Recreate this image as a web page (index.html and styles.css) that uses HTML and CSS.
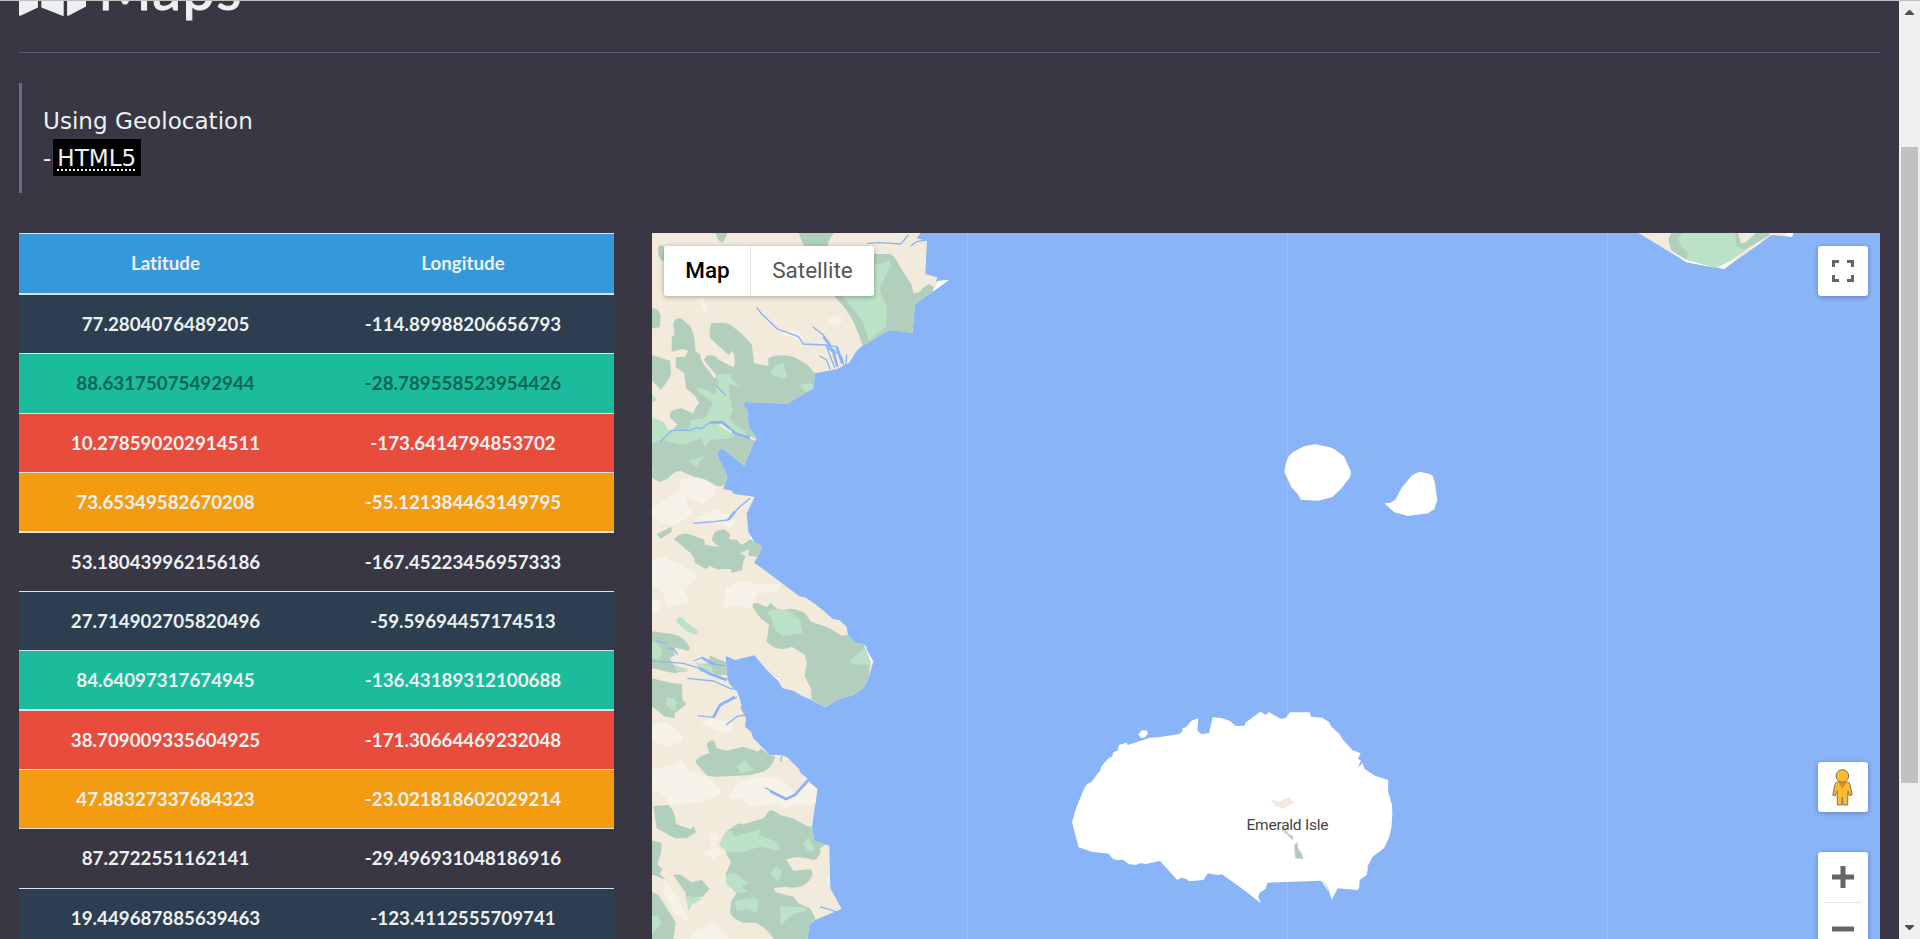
FILE: index.html
```html
<!DOCTYPE html>
<html lang="en">
<head>
<meta charset="utf-8">
<title>Maps</title>
<link rel="stylesheet" href="styles.css">
</head>
<body>
<div class="page">
<main class="content">
  <h1 class="title">
    <svg class="title-icon" viewBox="0 0 70 60"><path d="M0 10 19.500 0V51L1.500 59.500Q0 60 0 58.500ZM23 0 46 10V60L23 51ZM49.500 10 69 0V50L51 59.500Q49.500 60 49.500 58.500Z"/></svg>
    <span>Maps</span>
  </h1>
  <blockquote class="quote">
    <p>Using Geolocation</p>
    <p>-<abbr class="tag" title="HyperText Markup Language">HTML5</abbr></p>
  </blockquote>
  <div class="columns">
    <div class="coords">
      <div class="row head"><span>Latitude</span><span>Longitude</span></div>
      <div class="row active thick"><span>77.2804076489205</span><span>-114.89988206656793</span></div>
      <div class="row success muted"><span>88.63175075492944</span><span>-28.789558523954426</span></div>
      <div class="row danger short"><span>10.278590202914511</span><span>-173.6414794853702</span></div>
      <div class="row warning short"><span>73.65349582670208</span><span>-55.121384463149795</span></div>
      <div class="row thick"><span>53.180439962156186</span><span>-167.45223456957333</span></div>
      <div class="row active short"><span>27.714902705820496</span><span>-59.59694457174513</span></div>
      <div class="row success short"><span>84.64097317674945</span><span>-136.43189312100688</span></div>
      <div class="row danger thick"><span>38.709009335604925</span><span>-171.30664469232048</span></div>
      <div class="row warning short"><span>47.88327337684323</span><span>-23.021818602029214</span></div>
      <div class="row"><span>87.2722551162141</span><span>-29.496931048186916</span></div>
      <div class="row active"><span>19.449687885639463</span><span>-123.4112555709741</span></div>
    </div>
    <div class="map">
      <svg class="terrain" viewBox="652 233 1228 706">
        <!-- mainland -->
        <g transform="translate(650 230) scale(.33333)">
          <path class="land" d="M0 0H818L800 25 831 32 826 132 862 142 858 155 895 150 848 185 795 222 787 308 718 300 638 347 620 362 598 398 560 418 495 430 490 475 410 522 360 518 285 516 280 525 292 540 296 592 318 622 308 645 283 707 218 655 201 667 208 690 223 720 232 740 220 777 245 782 252 792 298 798 314 802 290 850 295 905 312 935 337 952 313 998 450 1100 465 1102 495 1122 518 1140 550 1168 568 1170 590 1190 594 1215 618 1240 640 1242 670 1295 655 1345 640 1375 610 1395 560 1410 525 1432 480 1408 430 1382 398 1375 385 1342 348 1317 313 1276 255 1290 227 1278 230 1330 237 1360 250 1375 262 1385 275 1425 272 1435 288 1465 285 1490 303 1505 310 1525 360 1575 392 1575 410 1580 447 1617 452 1630 472 1645 480 1657 502 1677 486 1790 492 1832 538 1847 541 1975 575 2037 495 2070 478 2085 472 2130H0Z"/>
          <path class="snow" d="M865 152 897 150 848 185ZM640 1242 650 1252 650 1272 660 1302 670 1295ZM345 1315 387 1345 398 1375 385 1352ZM505 1417 525 1432 545 1420ZM534 1940Q528 1950 539 1958ZM300 915 312 935 303 935ZM330 518Q350 508 366 517ZM432 1383 480 1408 455 1397Z"/>
          <path class="wood" d="M197 8Q205 40 218 38 228 25 232 8ZM446 8 462 50H533L535 35 552 8ZM25 50Q35 38 45 55V95Q20 90 25 50ZM672 72H720Q735 78 745 102L785 165 790 190Q812 188 818 175L835 163 852 170 848 185 795 222 787 308 718 300 638 347Q610 260 577 225L552 197H672ZM0 232Q28 235 32 255L30 292 0 296ZM65 365 65 322 74 315 70 280Q75 260 95 266L122 290Q136 320 136 362L152 375Q150 390 170 415L193 445 200 438 162 390 170 377Q195 372 204 388L250 412Q260 390 248 362L236 375 182 326 178 310 183 280Q230 275 245 287L276 312 306 345 312 400 355 408 355 385Q380 370 430 380L470 402 495 430 490 475 410 522 285 516 280 525 292 540 296 592 318 622 308 645 283 707 218 655 201 667 208 690 223 720 232 740 222 765Q202 775 185 758L132 740 92 723Q75 720 55 745L30 757 0 740V585L50 600 60 608 82 583 62 565Q50 540 95 535L130 550 138 530 148 520 135 497 108 475 103 430 77 410 78 382 105 380 115 363 100 357ZM0 373 60 392 63 430Q58 450 32 480L0 445ZM20 913 65 890 65 905 32 927ZM72 927Q90 908 115 912L162 928 165 945 205 950 185 930Q190 895 225 899L240 912 237 928 260 930 275 945 302 928 337 952 322 980 295 977 297 958 270 970 288 978Q275 1000 277 1020L245 1028 242 1017 200 1018 178 1007 168 1017 136 1000Q130 970 110 960ZM307 1127Q313 1110 338 1127L352 1130 362 1120 392 1145Q420 1125 465 1150L484 1175 540 1195 575 1217 592 1215 618 1240 640 1242 662 1295 655 1345 640 1375 610 1395 560 1410 525 1432 484 1408 484 1377 464 1340 470 1300 465 1275 425 1250Q385 1270 350 1235L357 1183Q325 1165 307 1127ZM0 1203 70 1213Q105 1220 120 1255L115 1262 70 1252 75 1275 60 1285 70 1305 115 1320 75 1330 40 1323 0 1312ZM180 1277 229 1297 230 1335 200 1335 150 1302 175 1300ZM0 1343 60 1358 95 1362 98 1410 110 1422 75 1450 73 1464 45 1460 0 1425ZM136 1597Q140 1580 178 1570L170 1545Q175 1530 193 1532L200 1555 230 1562 280 1550 325 1565 332 1555 360 1575 376 1580Q365 1615 340 1625L300 1635 200 1640 172 1637ZM10 1728 55 1725Q75 1740 78 1782L120 1797 132 1790 138 1807 110 1825H75L20 1795ZM0 1830 35 1838 33 1870 22 1903 37 1918 30 1932 47 1950 0 1930ZM70 1935 90 1933 125 1957 155 1950 179 1977 158 2000 107 2005V1990ZM0 1983 25 1995 77 2077 70 2130H0ZM245 1793Q270 1775 280 1783L340 1765 360 1740Q375 1742 390 1755L430 1765 470 1788 486 1790 492 1832 527 1843 510 1855 512 1870Q495 1895 490 1890 450 1875 408 1888 415 1900 430 1922 L480 1918Q495 1925 480 1950 455 1980 410 1970 L375 1973Q365 1985 395 1992L430 2000 445 2020 480 2035 497 2065 478 2085 472 2130H375L350 2100 320 2078 280 2078Q240 2065 240 2040L245 2010 260 1990 230 1960 228 1930 243 1895 230 1875 228 1860 208 1845Q225 1800 245 1793Z"/>
          <path class="park" d="M675 102Q700 100 718 93L724 105 690 170 695 200 712 230 708 290 657 332Q645 270 595 220L575 197H672ZM360 430 378 405 400 398 412 445Q395 450 360 430ZM450 465Q480 455 488 465L485 480 465 485ZM197 435 245 430 243 445 268 472 235 460 240 500 248 545 238 565 257 585 290 605 282 625Q260 610 240 625L182 630 165 650 155 625 100 645 30 630 0 645V560L40 575 55 600 120 595 120 570 165 565 190 520 140 480Q140 465 195 492L205 455ZM0 485 22 510 0 520ZM115 692 165 677 150 695 138 710ZM0 720 20 715 0 730ZM350 1145Q380 1130 415 1142L450 1170 458 1210 400 1218Q365 1200 365 1165ZM80 1165Q95 1155 108 1177L143 1200 143 1214Q115 1215 80 1175ZM0 1230Q30 1235 38 1270L25 1290 0 1280ZM137 1297 185 1310 190 1330 150 1325ZM74 1307 110 1320 113 1327 78 1322ZM596 1292 637 1262 645 1250 660 1305 610 1303ZM48 1403Q75 1400 80 1420L77 1443 50 1428ZM258 1610 282 1590 312 1620 275 1630ZM208 1845Q220 1805 245 1800L250 1820 335 1797 325 1815 380 1835 390 1862 330 1850 270 1868 228 1862ZM460 1840 475 1822 495 1860 475 1865ZM360 1930 378 1910 395 1920 393 1940 380 1953ZM232 1935Q240 1925 260 1932L294 1960 275 1970 292 1985 265 1990 230 1965ZM255 2013 315 2003 327 2010 320 2047 290 2037 260 2043ZM390 2027 468 2033 465 2045 430 2052 392 2085ZM107 1998 158 2005 125 2025 115 2043ZM0 2055 25 2060 33 2080 0 2120Z"/>
          <path class="wood" d="M692 170Q705 140 725 175L790 220 787 308 712 300 715 230 692 190Z"/>
          <path class="bare" d="M145 200H158L173 243 165 250ZM533 270Q550 255 575 262L577 275 555 290ZM397 312 430 298 455 315 460 340ZM95 748Q130 735 170 750L198 775 195 790 160 822 110 800Q100 810 130 850L95 875 65 887 10 865 0 835 30 815 85 787ZM132 865 200 840 235 855 258 875 240 895 210 880ZM0 990 40 980 85 1000 143 1030 138 1045 105 1070 90 1055 120 1115 55 1132 35 1080 0 1060ZM0 1108 25 1110 35 1135 30 1150 0 1148ZM220 1135 228 1075Q260 1050 300 1060L355 1065 393 1062 380 1085 320 1090 300 1135 250 1125ZM0 1493Q35 1465 60 1485L100 1520 95 1535 50 1547 0 1530ZM150 1480 185 1463 250 1480 245 1505 210 1505ZM0 1620Q50 1615 95 1590L115 1620 180 1640 215 1680 205 1695 150 1718 55 1722 45 1700 0 1675ZM237 1705 255 1665 310 1642 380 1640Q405 1645 430 1690L480 1660 502 1677 497 1720 475 1727 435 1720 410 1738 380 1720 300 1732 280 1708ZM165 1868 185 1855 180 1815 200 1810 203 1830 195 1850 218 1868 190 1888ZM43 1950 85 2000 95 2030 120 2078 75 2050 40 1990ZM118 2130 125 2105 155 2095 195 2077 240 2130Z"/>
          <path class="river" d="M30 637 65 602 105 600 120 602 140 592 152 597 180 577 218 577 255 610 300 623M200 467 227 497M320 232 335 252 370 285 382 297 445 320 460 342 527 345 560 350M488 290 520 315 550 360 575 380 582 410M528 345 545 390 555 415M508 378 530 390 540 418M590 373 588 405M652 40 690 38 752 42 775 15M782 48 800 35 830 30M130 880 190 875 232 870 255 845 272 828 300 805M0 1292 60 1297 100 1300 150 1315 180 1330 220 1345 245 1348M132 1293 155 1283 190 1302 225 1308M20 1232 50 1240M55 1253 72 1257 83 1275M112 1345 190 1353 240 1375 255 1378M143 1457 190 1462 210 1425 262 1401M228 1485 260 1460 285 1455M345 1673 408 1707 435 1695 475 1650M510 2030 558 2045M395 1578 392 1594"/>
          <path class="channel" d="M533 350 550 365 562 410M560 350 577 400M520 320 540 345M180 577H218L255 610 300 625M150 1315 180 1332 230 1350M190 1462 210 1425 255 1401M360 1683 408 1707 435 1695 475 1650M155 1283 190 1302M235 870 255 845"/>
          <path class="bare-line" d="M208 583 245 607M300 622 318 630"/>
        </g>
        <!-- northern cape -->
        <g transform="translate(1600 225) scale(.33333)">
          <path class="land" d="M112 22H580L576 35 515 30 372 132 260 112Z"/>
          <path class="wood" d="M215 22 205 42 213 75 258 107 345 128 510 30 505 22Z"/>
          <path class="park" d="M248 22 235 42 243 65 262 80 260 108 355 128 440 75 410 65 405 22Z"/>
          <path class="land" d="M413 22 423 55 438 52 470 22Z"/>
          <path class="snow" d="M210 77 260 112 345 128 260 105ZM410 102 352 127 372 132ZM440 80 480 50 482 54ZM560 22H580L576 35 558 33Z"/>
        </g>
        <!-- small islands -->
        <g transform="translate(1260 420) scale(.33333)">
          <path class="snow" d="M73 155 78 128 85 110 98 97 132 79 165 73 210 82 222 87 252 109 273 155 270 172 240 210 217 231 175 242 122 239 115 224 94 202ZM373 250 390 249 407 238 425 203 456 166 478 155 510 162 518 168 524 185 532 240 523 267 504 280 443 288 403 277Z"/>
        </g>
        <!-- Emerald Isle -->
        <g transform="translate(1050 690) scale(.33333)">
          <path class="snow" d="M66 397 78 355 102 297 112 281 124 276 150 242 155 228 175 205 185 201 190 187 202 182 208 164 230 158 233 165 300 143 325 142 388 132 397 125V115L408 112 424 92 445 85 442 122 455 133 477 129 488 82 515 84 541 94 557 108 584 107 586 98 631 65 647 75 656 66 692 86 708 83 720 67H779L783 80 817 83 838 97 843 109 868 131 877 147 908 181 932 190 924 206 933 212 923 233 938 220 944 237 975 257 1015 270 1014 304 1026 345 1027 375 1024 415 1017 443 1002 475 968 500 953 528V540L949 556 929 570 928 592 924 600 863 595 846 629 838 608 813 572 652 578 647 596 629 608 625 620 632 639 585 602 516 553 502 555 474 550 460 570 418 574 408 566 393 563 382 570 330 513 287 522 271 519 258 525 236 522 219 509 203 511 188 506 176 491 125 485 86 472ZM265 133 276 121 292 122 293 132 283 143 272 143Z"/>
          <path class="seam" d="M818 575Q832 585 837 608M816 577 834 608"/>
          <path class="land" d="M662 329 690 334 716 321 733 338 699 357 677 347Z"/>
          <path class="wood" d="M708 425 730 440 729 450 718 442ZM742 455 733 466V478L736 505 760 507 756 492 744 474Z"/>
          <path class="rock" d="M686 415 712 423 718 440Z"/>
        </g>
        <path class="tile" d="M967.500 233V939M1287.500 233V939M1607.500 233V939"/>
        <text class="place" x="1246.500" y="830" textLength="82">Emerald Isle</text>
      </svg>
      <div class="map-type"><button class="type-btn selected">Map</button><button class="type-btn">Satellite</button></div>
      <button class="control fullscreen" aria-label="Fullscreen"><svg viewBox="0 0 22 22"><path d="M0 0H7V3H3V7H0ZM15 0H22V7H19V3H15ZM0 15H3V19H7V22H0ZM19 15H22V22H15V19H19Z"/></svg></button>
      <button class="control pegman" aria-label="Street View"><svg viewBox="0 0 63 112"><path class="body" d="M18 39H45Q52 39 54 46L61 78 53 81 48 67 47 109H33L31 85 29 109H16L15 66 9 82 2 79 9 46Q11 39 18 39Z"/><path class="scarf" d="M19 39H44L31 60Z"/><circle class="body" cx="31" cy="21" r="19"/></svg></button>
      <div class="zoom"><button aria-label="Zoom in"><svg viewBox="0 0 22 22"><path d="M8.500 0H13.500V8.500H22V13.500H13.500V22H8.500V13.500H0V8.500H8.500Z"/></svg></button><button aria-label="Zoom out"><svg viewBox="0 0 22 22"><path d="M0 8.500H22V13.500H0Z"/></svg></button></div>
    </div>
  </div>
</main>
<aside class="scrollbar">
  <svg viewBox="0 0 9 5"><path d="M0 5V4L4 0H5L9 4V5Z"/></svg>
  <div class="thumb"></div>
  <svg viewBox="0 0 9 5"><path d="M0 0V1L4 5H5L9 1V0Z"/></svg>
</aside>
</div>
</body>
</html>
```
FILE: styles.css
```css
* { box-sizing: border-box; }
body { margin: 0; overflow: hidden; background: #383743; color: #ecf0f1; font-family: Lato, sans-serif; }
button { border: 0; padding: 0; background: none; font: inherit; }
.page { display: flex; height: 939px; border-top: 1px solid #c0c0c0; overflow: hidden; }
.content { flex: 1; min-width: 0; padding: 0 19px; }
.title { display: flex; align-items: flex-end; gap: 11px; height: 52px; margin: 0; border-bottom: 1px solid #5a5e7e; font-size: 58px; font-weight: 400; line-height: 58px; letter-spacing: 1.300px; -webkit-text-stroke: 1px #ecf0f1; }
.title-icon { width: 68px; height: 60px; fill: #ecf0f1; margin-bottom: 35px; flex: none; }
.title span { margin-bottom: 35px; }
.quote { margin: 30px 0 40px; height: 110px; padding: 20px 0 0 21px; border-left: 3px solid #69698d; font-family: "DejaVu Sans", sans-serif; font-size: 23.100px; line-height: 36px; }
.quote p { margin: 0; height: 36px; }
.tag { display: inline-block; height: 37px; line-height: 38px; margin-left: 2px; padding: 0 5px 0 4px; background: #000; text-decoration: underline dotted 2px; text-underline-offset: 3px; }
.columns { display: flex; gap: 38px; }
.coords { width: 595px; flex: none; font-size: 18.750px; font-weight: 700; font-variant-ligatures: none; }
.row { display: grid; grid-template-columns: 293px 302px; align-items: center; height: 60px; border-top: 1px solid #dfe2e5; text-align: center; line-height: 26px; padding-bottom: 1px; }
.short { height: 59px; }
.thick { border-top-width: 2px; }
.head { background: #3498db; }
.active { background: #2d3e50; }
.success { background: #1abc9c; }
.danger { background: #e84c3d; }
.warning { background: #f39c12; }
.muted { color: #0d6553; }
.map { position: relative; flex: 1; height: 706px; background: #8ab4f8; font-family: Roboto, sans-serif; overflow: hidden; }
.terrain { display: block; width: 1228px; height: 706px; }
.land { fill: #f2eadb; }
.wood { fill: #b2cfbd; }
.park { fill: #bbe2c6; }
.bare { fill: #f7f2e8; }
.snow { fill: #fff; }
.rock { fill: #d2cdc0; }
.river, .channel { fill: none; stroke: #8ab4f8; stroke-width: 4; }
.channel { stroke-width: 8; }
.bare-line { fill: none; stroke: #f2eadb; stroke-width: 7; }
.seam { fill: none; stroke: #8ab4f8; stroke-width: 2; }
.tile { fill: none; stroke: #fff; stroke-opacity: .16; }
.place { font-size: 15.500px; fill: #444; }
.map-type, .control, .zoom { position: absolute; background: #fff; border-radius: 3px; box-shadow: 0 1px 5px rgba(0, 0, 0, .3); }
.map-type { left: 12px; top: 13px; display: flex; height: 50px; }
.type-btn { width: 123px; padding-bottom: 2px; font-size: 22.500px; color: #565656; }
.type-btn.selected { width: 87px; padding-left: 1px; color: #000; font-weight: 500; border-right: 1px solid #e6e6e6; }
.control { right: 12px; width: 50px; height: 50px; display: grid; place-items: center; }
.control svg, .zoom svg { width: 22px; height: 22px; fill: #666; }
.fullscreen { top: 13px; }
.pegman { top: 529px; }
.pegman svg { width: 21px; height: 37px; margin-right: 2px; }
.pegman .body { fill: #fbbc2b; stroke: #77716a; stroke-width: 3; }
.pegman .scarf { fill: #e1842b; }
.zoom { right: 12px; top: 619px; width: 50px; height: 102px; padding: 0 6px; }
.zoom button { display: grid; place-items: center; width: 38px; height: 51px; }
.zoom button:first-child { border-bottom: 1px solid #e2e2e2; }
.scrollbar { width: 21px; height: 938px; padding: 9px 3px 9px 2px; background: #f0f0f0; display: flex; flex-direction: column; align-items: center; }
.scrollbar svg { width: 9px; height: 5px; fill: #505050; }
.thumb { width: 17px; height: 636px; margin: 132px 0 auto; background: #c1c1c1; }
```
